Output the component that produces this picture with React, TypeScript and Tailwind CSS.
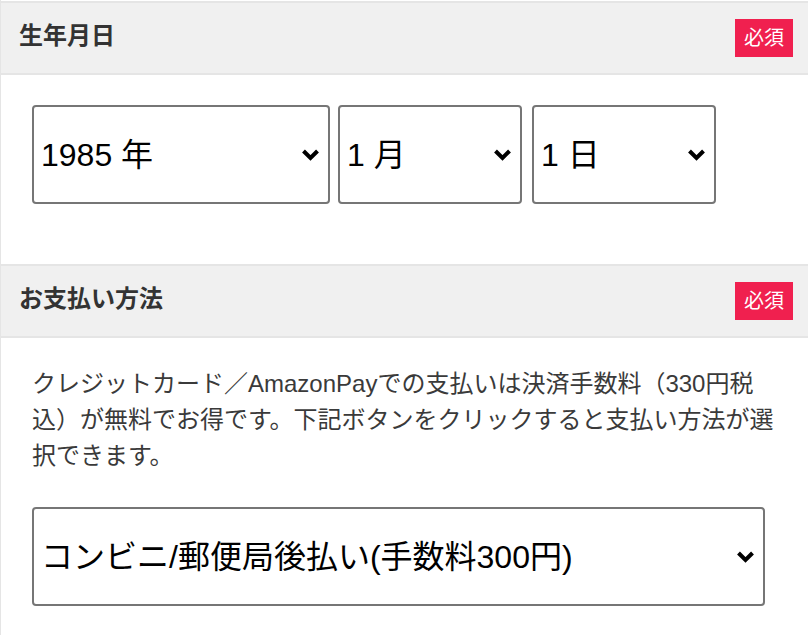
import { useState } from "react"

const font = "font-['Liberation_Sans','Noto_Sans_CJK_JP',sans-serif]"

function Chevron() {
  return (
    <svg
      className="pointer-events-none absolute right-[10px] top-1/2 -translate-y-1/2"
      width="19"
      height="13"
      viewBox="0 0 19 13"
      fill="none"
    >
      <path d="M2.5 2.5 L9.5 9.5 L16.5 2.5" stroke="#000" strokeWidth="4" />
    </svg>
  )
}

function Select({
  value,
  options,
  onChange,
  className,
}: {
  value: string
  options: string[]
  onChange: (v: string) => void
  className: string
}) {
  return (
    <div className={`relative ${className}`}>
      <select
        value={value}
        onChange={(e) => onChange(e.target.value)}
        className={`h-[99px] w-full appearance-none rounded-[4px] border-2 border-[#767676] bg-white pl-[7px] pr-10 text-[32px] text-black outline-none ${font}`}
      >
        {options.map((o) => (
          <option key={o} value={o}>
            {o}
          </option>
        ))}
      </select>
      <Chevron />
    </div>
  )
}

function Header({ title }: { title: string }) {
  return (
    <div className="flex h-[74px] items-center justify-between border-y-2 border-[#e5e5e5] bg-[#f0f0f0] pl-[18px] pr-[15px]">
      <h2 className={`-mt-[5px] text-[24px] font-bold text-[#333] ${font}`}>{title}</h2>
      <span
        className={`flex h-[38px] w-[58px] items-center justify-center bg-[#f0204f] text-[20px] text-white ${font}`}
      >
        必須
      </span>
    </div>
  )
}

const years = Array.from({ length: 80 }, (_, i) => `${1940 + i} 年`)
const months = Array.from({ length: 12 }, (_, i) => `${i + 1} 月`)
const days = Array.from({ length: 31 }, (_, i) => `${i + 1} 日`)

export default function App() {
  const [year, setYear] = useState("1985 年")
  const [month, setMonth] = useState("1 月")
  const [day, setDay] = useState("1 日")
  const [pay, setPay] = useState("コンビニ/郵便局後払い(手数料300円)")

  return (
    <div className="min-h-[635px] w-[808px] border-l border-[#e5e5e5] bg-white pt-px">
      <Header title="生年月日" />
      <div className="flex pb-[60px] pl-[31px] pt-[30px]">
        <Select value={year} options={years} onChange={setYear} className="w-[298px]" />
        <Select value={month} options={months} onChange={setMonth} className="ml-2 w-[184px]" />
        <Select value={day} options={days} onChange={setDay} className="ml-[10px] w-[184px]" />
      </div>

      <Header title="お支払い方法" />
      <div className="pl-[31px] pt-[28px]">
        <p className={`whitespace-nowrap text-[24px] leading-[36px] text-[#3a3a3a] ${font}`}>
          クレジットカード／AmazonPayでの支払いは決済手数料（330円税
          <br />
          込）が無料でお得です。下記ボタンをクリックすると支払い方法が選
          <br />
          択できます。
        </p>
        <Select
          value={pay}
          options={["コンビニ/郵便局後払い(手数料300円)", "クレジットカード", "AmazonPay"]}
          onChange={setPay}
          className="mt-[33px] w-[733px]"
        />
      </div>
    </div>
  )
}
